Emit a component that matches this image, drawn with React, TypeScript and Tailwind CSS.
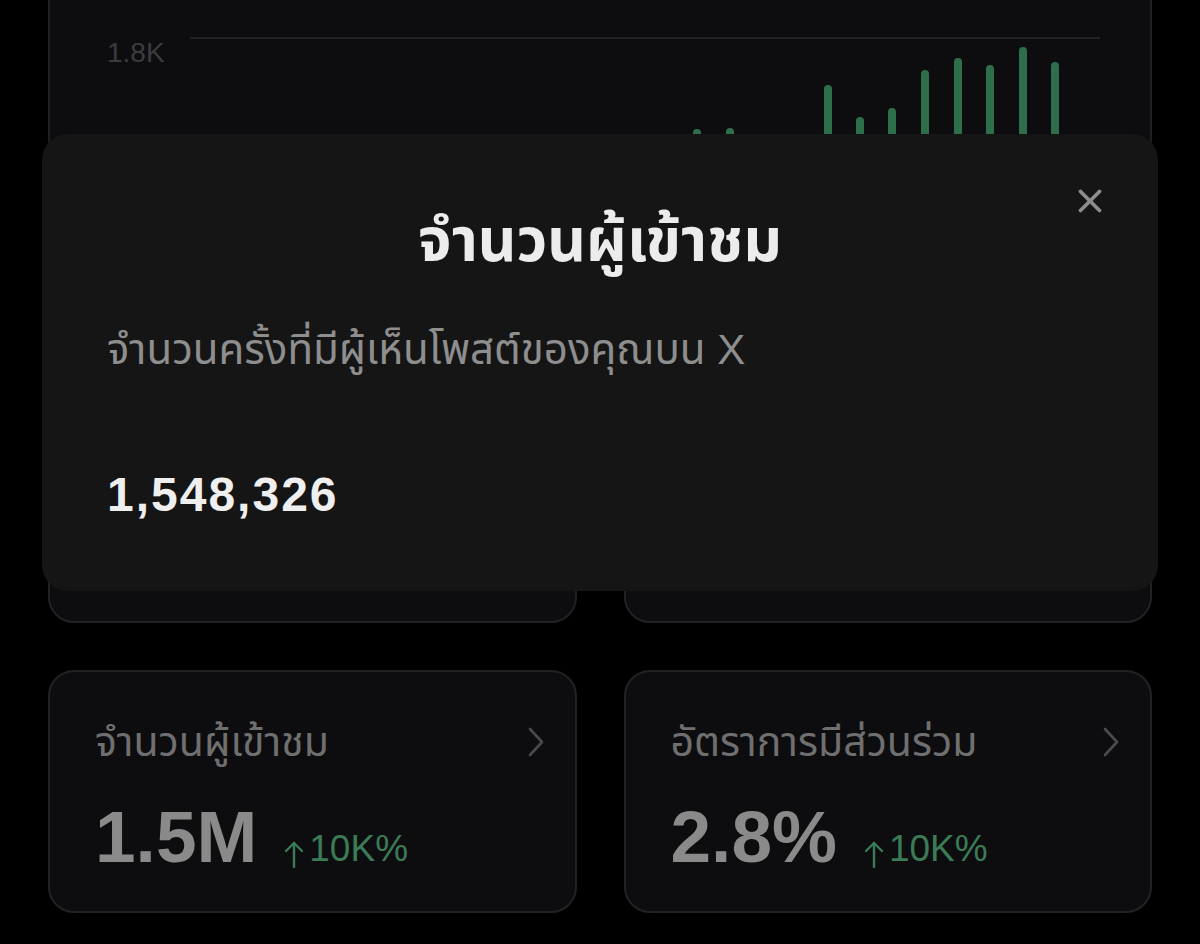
import { X } from 'lucide-react';

const bars = [
  { x: 665, top: 150 },
  { x: 697, top: 129 },
  { x: 730, top: 128 },
  { x: 762, top: 160 },
  { x: 795, top: 140 },
  { x: 828, top: 85 },
  { x: 860, top: 117 },
  { x: 892, top: 108 },
  { x: 925, top: 70 },
  { x: 958, top: 58 },
  { x: 990, top: 65 },
  { x: 1023, top: 47 },
  { x: 1055, top: 62 },
];

const font = "font-['Liberation_Sans','Noto_Sans_Thai','Noto_Sans',sans-serif]";

function Chevron() {
  return (
    <svg width="18" height="32" viewBox="0 0 18 32" fill="none" className="mr-[6px]">
      <polyline points="3,3 15,16 3,29" stroke="#4a4a4c" strokeWidth="2.6" strokeLinecap="round" strokeLinejoin="round" />
    </svg>
  );
}

function UpArrow() {
  return (
    <svg width="20" height="28" viewBox="0 0 20 28" fill="none" className="mr-[5px]">
      <line x1="10" y1="3" x2="10" y2="27" stroke="#3b7b56" strokeWidth="2.4" strokeLinecap="round" />
      <polyline points="2,11 10,3 18,11" stroke="#3b7b56" strokeWidth="2.4" strokeLinecap="round" strokeLinejoin="round" />
    </svg>
  );
}

function StatCard({ label, value }: { label: string; value: string }) {
  return (
    <div className="h-[243px] rounded-[26px] border-2 border-[#222224] bg-[#0d0d0f] pl-[45px] pr-[24px] pt-[48px]">
      <div className="flex items-center justify-between">
        <span className="text-[41px] leading-[44px] text-[#6f6f6f]">{label}</span>
        <Chevron />
      </div>
      <div className="mt-[37px] flex items-end gap-[27px]">
        <span className="text-[73px] font-bold leading-[72px] text-[#8a8a8a]">{value}</span>
        <span className="mb-[5px] flex items-end text-[37px] leading-[38px] text-[#3b7b56]">
          <UpArrow />
          10K%
        </span>
      </div>
    </div>
  );
}

export default function App() {
  return (
    <div className={`relative h-[944px] overflow-hidden bg-black ${font}`}>
      <div className="px-12">
        {/* Chart card */}
        <div className="-mt-[30px] h-[360px] rounded-[26px] border-2 border-[#1f1f21] bg-[#0d0d0f] pl-[57px] pt-[58px]">
          <div className="flex items-start">
            <span className="mt-[7px] w-[83px] text-[28px] leading-[32px] text-[#3c3c3f]">1.8K</span>
            <svg width="910" height="280" viewBox="0 0 910 280">
              <line x1="0" y1="8" x2="910" y2="8" stroke="#222225" strokeWidth="2" />
              {bars.map((b) => (
                <line
                  key={b.x}
                  x1={b.x - 190}
                  x2={b.x - 190}
                  y1={b.top - 30 + 4}
                  y2={270}
                  stroke="#2f6e4b"
                  strokeWidth="8"
                  strokeLinecap="round"
                />
              ))}
            </svg>
          </div>
        </div>

        <div className="mt-[47px] grid grid-cols-2 gap-[47px]">
          <div className="h-[246px] rounded-[26px] border-2 border-[#222224] bg-[#0d0d0f]" />
          <div className="h-[246px] rounded-[26px] border-2 border-[#222224] bg-[#0d0d0f]" />
        </div>

        <div className="mt-[47px] grid grid-cols-2 gap-[47px]">
          <StatCard label="จำนวนผู้เข้าชม" value="1.5M" />
          <StatCard label="อัตราการมีส่วนร่วม" value="2.8%" />
        </div>
      </div>

      {/* Modal */}
      <div className="absolute left-[42px] top-[134px] h-[457px] w-[1116px] rounded-[26px] bg-[#151515]">
        <button className="absolute right-[49px] top-[48px] text-[#8d8d8d]">
          <X className="h-[38px] w-[38px]" strokeWidth={2.4} />
        </button>
        <h2 className="pt-[71px] text-center text-[60px] font-bold leading-[72px] text-[#ececec]">จำนวนผู้เข้าชม</h2>
        <p className="mt-[45px] pl-[65px] text-[42px] leading-[56px] text-[#8e8e8e]">
          จำนวนครั้งที่มีผู้เห็นโพสต์ของคุณบน X
        </p>
        <p className="mt-[89px] pl-[65px] text-[48px] font-bold leading-[56px] tracking-[2px] text-[#efefef]">
          1,548,326
        </p>
      </div>
    </div>
  );
}
